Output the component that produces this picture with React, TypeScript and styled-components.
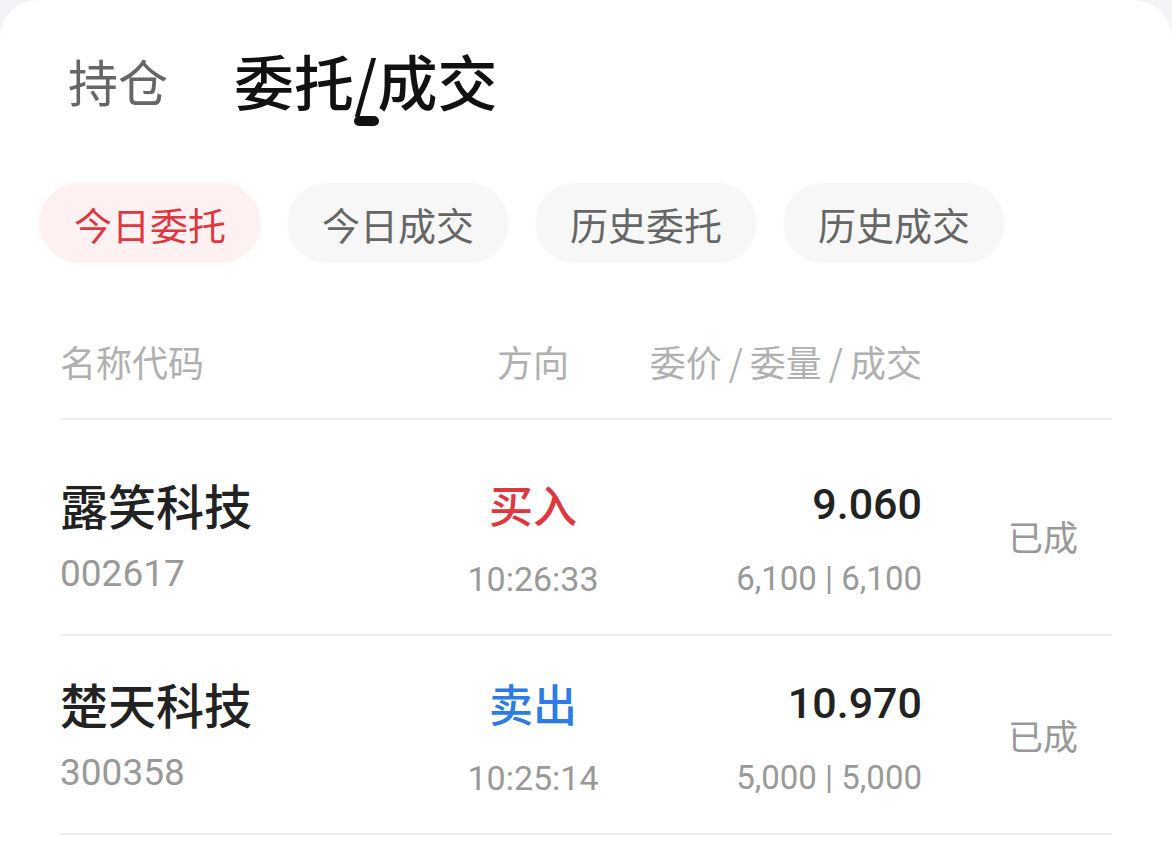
import React from 'react';
import styled, { createGlobalStyle } from 'styled-components';

const GlobalStyle = createGlobalStyle`
  html, body {
    margin: 0;
    padding: 0;
    background: #f2f3f7;
    font-family: Roboto, "Noto Sans CJK SC", "Noto Sans", sans-serif;
  }
`;

const Sheet = styled.div`
  background: #ffffff;
  border-radius: 38px 38px 0 0;
  min-height: 848px;
  box-sizing: border-box;
  padding-top: 38px;
`;

const TabBar = styled.div`
  display: flex;
  align-items: center;
  gap: 66px;
  padding-left: 68px;
  height: 84px;
`;

const Tab = styled.div<{ $active?: boolean }>`
  position: relative;
  font-size: ${(p) => (p.$active ? '60px' : '50px')};
  font-weight: ${(p) => (p.$active ? 500 : 400)};
  color: ${(p) => (p.$active ? '#111111' : '#666666')};
  line-height: 84px;
  font-family: "Noto Sans CJK SC", sans-serif;
`;

const Indicator = styled.span`
  position: absolute;
  left: 50%;
  bottom: -4px;
  width: 25px;
  height: 10px;
  margin-left: -12px;
  border-radius: 5px;
  background: #111111;
`;

const ChipRow = styled.div`
  display: flex;
  gap: 26px;
  padding: 61px 0 0 39px;
`;

const Chip = styled.div<{ $active?: boolean }>`
  height: 80px;
  padding: 0 35px;
  border-radius: 40px;
  display: flex;
  align-items: center;
  font-family: "Noto Sans CJK SC", sans-serif;
  font-size: 38px;
  color: ${(p) => (p.$active ? '#e0363f' : '#666666')};
  background: ${(p) => (p.$active ? '#fdf1f1' : '#f7f7f7')};
`;

const Table = styled.div`
  margin: 41px 60px 0 60px;
`;

const Columns = styled.div`
  display: grid;
  grid-template-columns: 380px 186px 296px 1fr;
`;

const HeaderRow = styled(Columns)`
  height: 114px;
  align-items: center;
  border-bottom: 2px solid #eeeeee;
  font-family: "Noto Sans CJK SC", sans-serif;
  font-size: 36px;
  color: #b0b0b0;
`;

const HeadCell = styled.div<{ $align?: 'left' | 'center' | 'right' }>`
  text-align: ${(p) => p.$align || 'left'};
  white-space: nowrap;
`;

const Slash = styled.span`
  margin: 0 7px;
`;

const Row = styled(Columns)<{ $first?: boolean }>`
  align-items: start;
  padding: ${(p) => (p.$first ? '56px' : '39px')} 0 35px;
  border-bottom: 2px solid #eeeeee;
`;

const NameCell = styled.div`
  display: flex;
  flex-direction: column;
  gap: 20px;
`;

const Name = styled.div`
  font-family: "Noto Sans CJK SC", sans-serif;
  font-size: 48px;
  line-height: 56px;
  font-weight: 500;
  color: #222222;
`;

const Code = styled.div`
  font-size: 37px;
  line-height: 44px;
  color: #999999;
`;

const StackCell = styled.div<{ $align: 'center' | 'flex-end' }>`
  display: flex;
  flex-direction: column;
  align-items: ${(p) => p.$align};
  gap: 27px;
`;

const Side = styled.div<{ $buy?: boolean }>`
  font-family: "Noto Sans CJK SC", sans-serif;
  font-size: 44px;
  line-height: 56px;
  font-weight: 500;
  color: ${(p) => (p.$buy ? '#e0363f' : '#2d7be5')};
`;

const Price = styled.div`
  font-size: 43px;
  line-height: 56px;
  font-weight: 500;
  color: #222222;
`;

const Minor = styled.div<{ $size: number }>`
  font-size: ${(p) => p.$size}px;
  line-height: 40px;
  color: #999999;
  white-space: nowrap;
`;

const Status = styled.div`
  align-self: center;
  margin-bottom: 4px;
  padding-left: 86px;
  font-family: "Noto Sans CJK SC", sans-serif;
  font-size: 35px;
  color: #999999;
`;

interface Order {
  name: string;
  code: string;
  buy: boolean;
  time: string;
  price: string;
  qty: string;
  status: string;
}

const orders: Order[] = [
  { name: '露笑科技', code: '002617', buy: true, time: '10:26:33', price: '9.060', qty: '6,100 | 6,100', status: '已成' },
  { name: '楚天科技', code: '300358', buy: false, time: '10:25:14', price: '10.970', qty: '5,000 | 5,000', status: '已成' },
];

const chips = ['今日委托', '今日成交', '历史委托', '历史成交'];

export default function App() {
  return (
    <>
      <GlobalStyle />
      <Sheet>
        <TabBar>
          <Tab>持仓</Tab>
          <Tab $active>
            委托/成交
            <Indicator />
          </Tab>
        </TabBar>

        <ChipRow>
          {chips.map((c, i) => (
            <Chip key={c} $active={i === 0}>{c}</Chip>
          ))}
        </ChipRow>

        <Table>
          <HeaderRow>
            <HeadCell>名称代码</HeadCell>
            <HeadCell $align="center">方向</HeadCell>
            <HeadCell $align="right">
              委价<Slash>/</Slash>委量<Slash>/</Slash>成交
            </HeadCell>
            <HeadCell />
          </HeaderRow>

          {orders.map((o, i) => (
            <Row key={o.code} $first={i === 0}>
              <NameCell>
                <Name>{o.name}</Name>
                <Code>{o.code}</Code>
              </NameCell>
              <StackCell $align="center">
                <Side $buy={o.buy}>{o.buy ? '买入' : '卖出'}</Side>
                <Minor $size={34}>{o.time}</Minor>
              </StackCell>
              <StackCell $align="flex-end">
                <Price>{o.price}</Price>
                <Minor $size={33}>{o.qty}</Minor>
              </StackCell>
              <Status>{o.status}</Status>
            </Row>
          ))}
        </Table>
      </Sheet>
    </>
  );
}
